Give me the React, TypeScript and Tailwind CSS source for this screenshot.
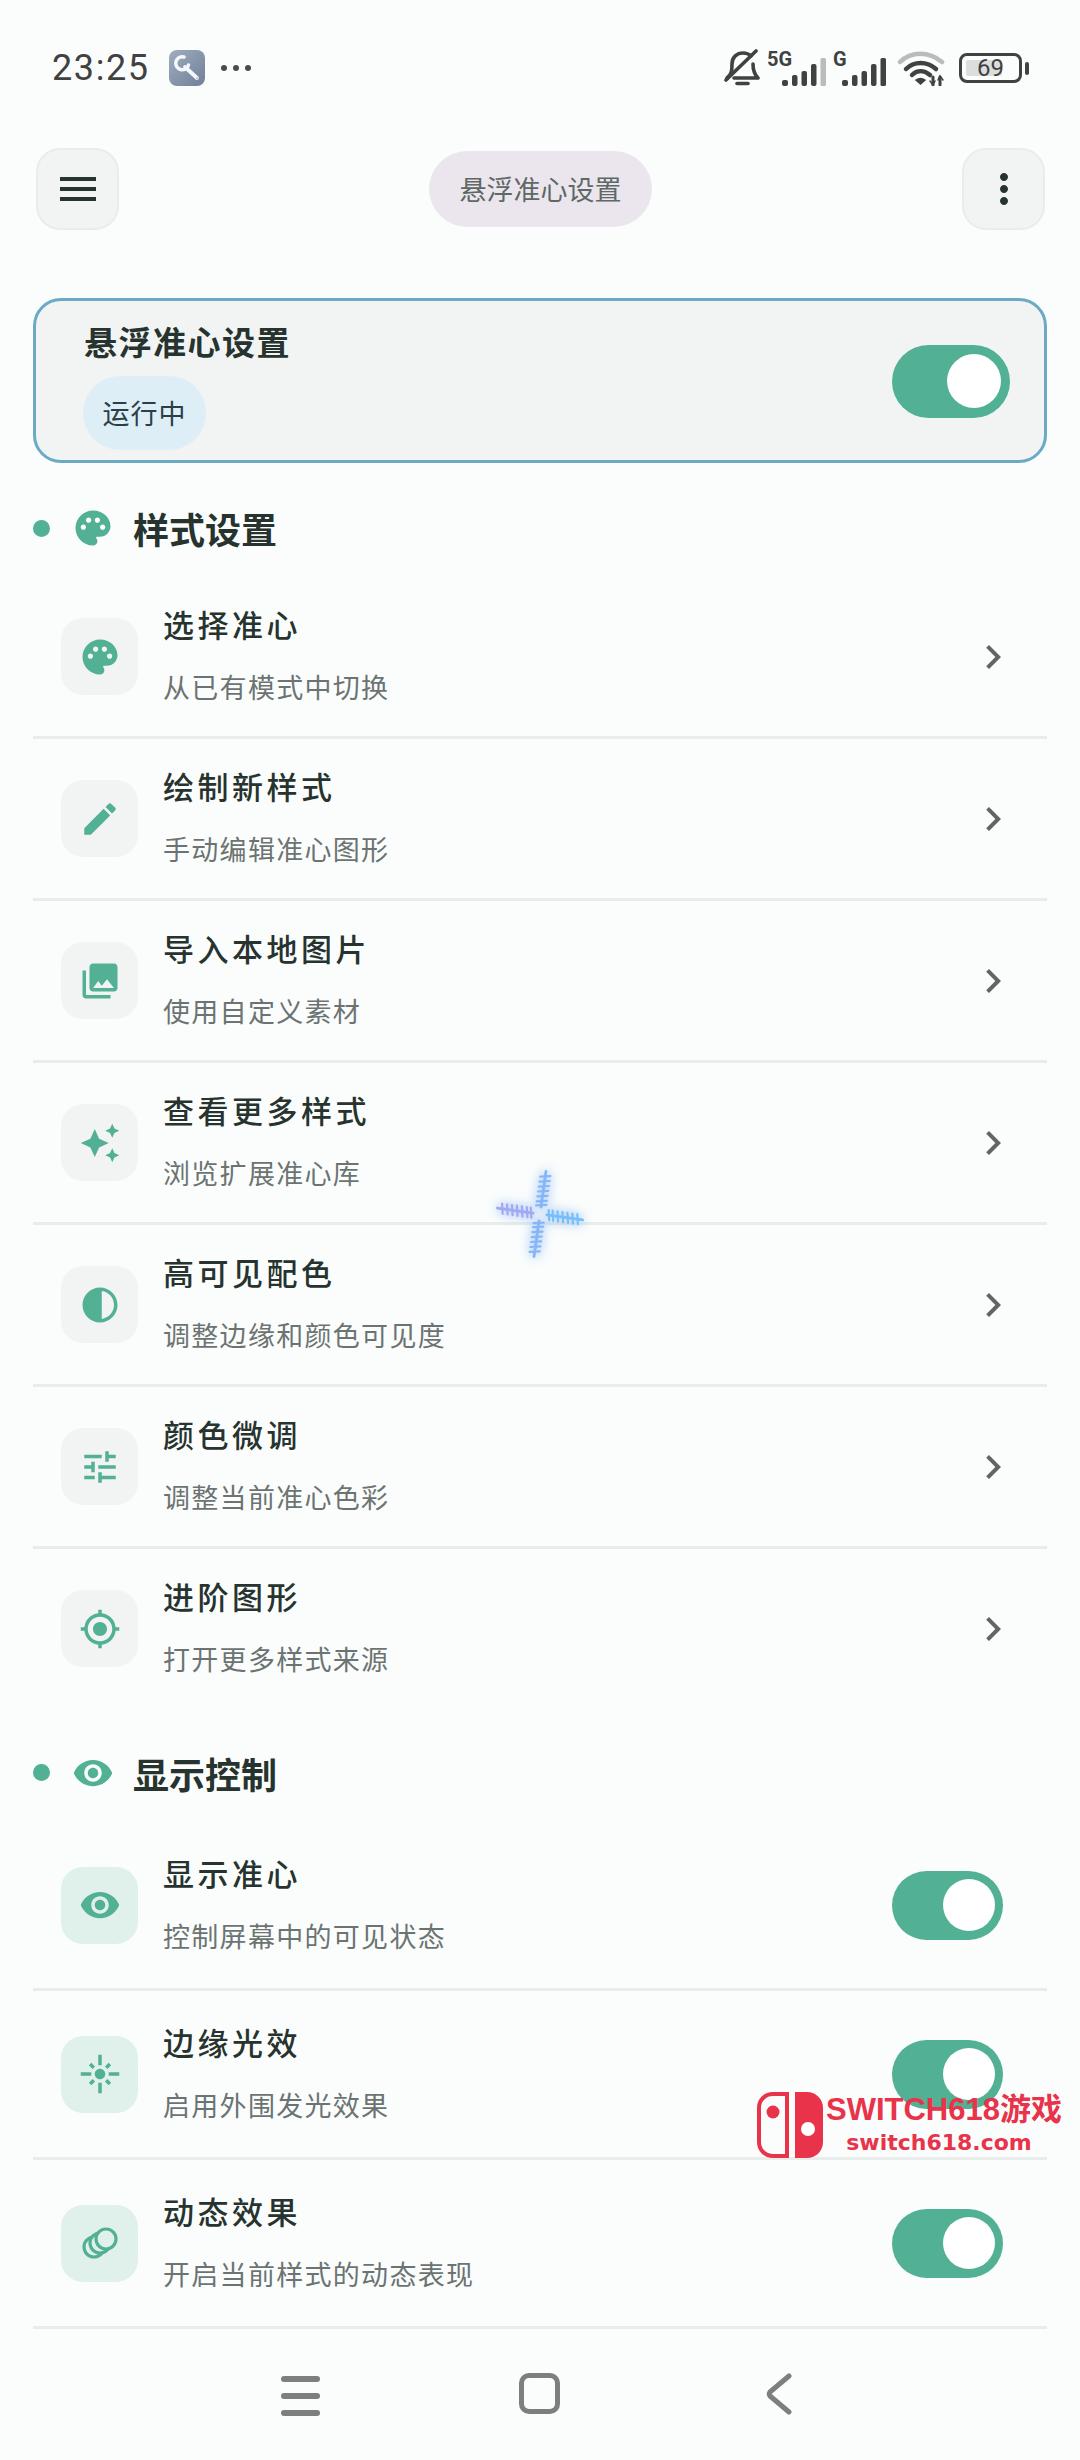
import React from 'react';
import {
  MdPalette,
  MdEdit,
  MdPhotoLibrary,
  MdAutoAwesome,
  MdContrast,
  MdTune,
  MdGpsFixed,
  MdVisibility,
  MdFlare,
  MdMenu,
  MdMoreVert,
  MdChevronRight,
} from 'react-icons/md';

const Switch = ({ large = false }: { large?: boolean }) => (
  <div
    className={`flex items-center justify-end rounded-full bg-[#52b094] ${
      large ? 'mt-[1px] h-[73px] w-[118px] pr-[9px]' : 'h-[69px] w-[111px] pr-[8px]'
    }`}
  >
    <div className={`rounded-full bg-white ${large ? 'h-[54px] w-[54px]' : 'h-[52px] w-[52px]'}`} />
  </div>
);

const SectionHeader = ({ icon, title, pad }: { icon: React.ReactNode; title: string; pad: string }) => (
  <div className={`flex items-center ${pad}`}>
    <div className="h-[17px] w-[17px] rounded-full bg-[#52b094]" />
    <div className="ml-[20px] flex w-[46px] justify-center text-[#52b094]">{icon}</div>
    <div className="ml-[17px] text-[36px] leading-[48px] font-bold text-[#27332f]">{title}</div>
  </div>
);

interface RowProps {
  icon: React.ReactNode;
  title: string;
  sub: string;
  tinted?: boolean;
  toggle?: boolean;
  last?: boolean;
}

const Row = ({ icon, title, sub, tinted, toggle, last }: RowProps) => (
  <div
    className={`flex items-center border-b-[3px] pl-[28px] ${toggle ? 'h-[169px] pr-[44px]' : 'h-[162px] pr-[30px]'} ${
      last ? 'border-transparent' : 'border-[#e8edeb]'
    }`}
  >
    <div
      className={`flex h-[77px] w-[77px] items-center justify-center rounded-[22px] text-[#52b094] ${
        tinted ? 'bg-[#dff1ea]' : 'bg-[#f2f4f4]'
      }`}
    >
      {icon}
    </div>
    <div className="ml-[25px] flex flex-1 flex-col gap-[23px] pb-[2px]">
      <div className="text-[31px] leading-[40px] font-medium tracking-[3.5px] text-[#27332f]">{title}</div>
      <div className="text-[27px] leading-[40px] tracking-[1.3px] text-[#6b7472]">{sub}</div>
    </div>
    {toggle ? <Switch /> : <MdChevronRight size={48} className="text-[#5f6664]" />}
  </div>
);

const Bars = ({ dim }: { dim?: boolean }) => (
  <svg width="44" height="28" viewBox="0 0 44 28">
    <rect x="0" y="22" width="6" height="6" rx="2" fill="#3f4241" />
    <rect x="10" y="17" width="5.5" height="11" rx="2" fill="#3f4241" />
    <rect x="19.5" y="13" width="5.5" height="15" rx="2" fill="#3f4241" />
    <rect x="29" y="6" width="5.5" height="22" rx="2" fill="#3f4241" />
    <rect x="38.5" y="0" width="5.5" height="28" rx="1.5" fill={dim ? '#b9bcbb' : '#3f4241'} />
  </svg>
);

const CrossArm = ({ angle, color }: { angle: number; color: string }) => (
  <g transform={`rotate(${angle} 50 50)`} stroke={color} strokeLinecap="round">
    <line x1="50" y1="7" x2="50" y2="43" strokeWidth="2.8" />
    {[12, 17, 22, 27, 32, 37, 41].map((y) => (
      <line key={y} x1="45" y1={y + 1} x2="55" y2={y - 1} strokeWidth="2.2" />
    ))}
  </g>
);

const RingsIcon = () => (
  <svg width="36" height="34" viewBox="0 0 36 34" fill="#dff1ea" stroke="#52b094" strokeWidth="3.2">
    <circle cx="12" cy="21" r="10" />
    <circle cx="18" cy="17" r="10" />
    <circle cx="24" cy="13" r="10" />
  </svg>
);

export default function App() {
  return (
    <div className="relative h-[2460px] w-[1080px] overflow-hidden bg-[#fbfdfc] font-['Noto_Sans_CJK_SC','Noto_Sans',sans-serif]">
      {/* status bar */}
      <div className="flex h-[148px] items-start justify-between pt-[50px] pr-[51px] pl-[52px]">
        <div className="flex h-[36px] items-center">
          <span className="font-['Roboto',sans-serif] text-[36px] leading-[36px] font-[450] tracking-[1.6px] text-[#3f4241]">
            23:25
          </span>
          <div className="ml-[19px] flex h-[36px] w-[36px] items-center justify-center rounded-[8px] bg-gradient-to-br from-[#a0adbe] to-[#6f8098]">
            <svg width="36" height="36" viewBox="0 0 36 36" fill="none" stroke="#f4f7fb" strokeLinecap="round">
              <path d="M15 7 A6.5 6.5 0 1 0 19.5 15" strokeWidth="3.5" />
              <path d="M16 17 L28 28" strokeWidth="3.8" />
              <circle cx="28" cy="28" r="0.8" fill="#8a98aa" stroke="none" />
            </svg>
          </div>
          <div className="ml-[16px] flex gap-[6px]">
            <div className="h-[6px] w-[6px] rounded-full bg-[#4a4d4c]" />
            <div className="h-[6px] w-[6px] rounded-full bg-[#4a4d4c]" />
            <div className="h-[6px] w-[6px] rounded-full bg-[#4a4d4c]" />
          </div>
        </div>
        <div className="flex h-[36px] items-center">
          <svg width="36" height="38" viewBox="0 0 36 38" fill="none" stroke="#3f4241" strokeWidth="3.6" strokeLinecap="round" strokeLinejoin="round">
            <path d="M3 29 C8 25 8 21 8 15 C8 8 13 4 19 4 C22 4 25 5 27 7" />
            <path d="M29 15 C29 21 30 25 34 29 L10 29" />
            <path d="M2 31 L32 2" />
            <path d="M13 34.5 H24" strokeWidth="3.6" />
          </svg>
          <div className="relative ml-[7px] h-[36px] w-[59px]">
            <span className="absolute top-[-1px] left-0 font-['Roboto',sans-serif] text-[20px] leading-[20px] font-bold text-[#3f4241]">5G</span>
            <div className="absolute right-0 bottom-0">
              <Bars dim />
            </div>
          </div>
          <div className="relative ml-[7px] h-[36px] w-[53px]">
            <span className="absolute top-[-1px] left-0 font-['Roboto',sans-serif] text-[20px] leading-[20px] font-bold text-[#3f4241]">G</span>
            <div className="absolute right-0 bottom-0">
              <Bars />
            </div>
          </div>
          <svg className="ml-[11px]" width="48" height="36" viewBox="0 0 48 36" fill="none" strokeLinecap="round">
            <path d="M3 12 C14 1 32 1 45 12" stroke="#b9bcbb" strokeWidth="4.5" />
            <path d="M9 19 C17 11 30 11 39 19" stroke="#3f4241" strokeWidth="4.5" />
            <path d="M15 25 C20 20 27 20 33 25" stroke="#3f4241" strokeWidth="4.5" />
            <path d="M23.5 34 L19 30 C22 28 25 28 28 30 Z" fill="#3f4241" stroke="#3f4241" strokeWidth="1.5" />
            <path d="M36 27 V35 M43 35 V27" stroke="#3f4241" strokeWidth="3" />
            <path d="M33 31 L36 35 L38 31 M41 30 L43 26 L46 30" stroke="#3f4241" strokeWidth="1.5" />
          </svg>
          <div className="ml-[14px] flex items-center">
            <div className="relative flex h-[30px] w-[63px] items-center justify-center overflow-hidden rounded-[8px] border-[3px] border-[#3f4241]">
              <div className="absolute top-[4px] bottom-[4px] left-[4px] w-[36px] rounded-[2px] bg-[#dcdede]" />
              <span className="relative font-['Roboto',sans-serif] text-[24px] leading-[24px] text-[#3f4241]">69</span>
            </div>
            <div className="ml-[3px] h-[13px] w-[4px] rounded-full bg-[#3f4241]" />
          </div>
        </div>
      </div>

      {/* top bar */}
      <div className="flex h-[82px] items-center justify-between pr-[35px] pl-[36px]">
        <div className="flex h-[82px] w-[83px] items-center justify-center rounded-[24px] border-[2px] border-[#e8edeb] bg-[#f2f4f3] text-[#27332f]">
          <MdMenu size={48} />
        </div>
        <div className="flex h-[76px] w-[223px] items-center justify-center rounded-full bg-[#ebe6ee] text-[27px] text-[#5f6866]">
          悬浮准心设置
        </div>
        <div className="flex h-[82px] w-[83px] items-center justify-center rounded-[24px] border-[2px] border-[#e8edeb] bg-[#f2f4f3] text-[#27332f]">
          <MdMoreVert size={48} />
        </div>
      </div>

      {/* master card */}
      <div className="mx-[33px] mt-[68px] flex h-[165px] items-center justify-between rounded-[28px] border-[3px] border-[#6aaac4] bg-[#f2f4f4] pr-[34px] pl-[47px]">
        <div className="flex flex-col items-start gap-[15px] pt-[10px]">
          <div className="ml-[1px] text-[33px] leading-[40px] font-bold tracking-[1.5px] text-[#27332f]">悬浮准心设置</div>
          <div className="flex h-[74px] w-[123px] items-center justify-center rounded-full bg-[#deeef7] text-[27px] tracking-[1px] text-[#2a3f47]">
            运行中
          </div>
        </div>
        <Switch large />
      </div>

      {/* style section */}
      <div className="px-[33px]">
        <SectionHeader icon={<MdPalette size={42} />} title="样式设置" pad="h-[114px] pt-[16px]" />
        <Row icon={<MdPalette size={42} />} title="选择准心" sub="从已有模式中切换" />
        <Row icon={<MdEdit size={42} />} title="绘制新样式" sub="手动编辑准心图形" />
        <Row icon={<MdPhotoLibrary size={42} />} title="导入本地图片" sub="使用自定义素材" />
        <Row icon={<MdAutoAwesome size={42} />} title="查看更多样式" sub="浏览扩展准心库" />
        <Row icon={<MdContrast size={42} />} title="高可见配色" sub="调整边缘和颜色可见度" />
        <Row icon={<MdTune size={42} />} title="颜色微调" sub="调整当前准心色彩" />
        <Row icon={<MdGpsFixed size={42} />} title="进阶图形" sub="打开更多样式来源" last />

        <SectionHeader icon={<MdVisibility size={42} />} title="显示控制" pad="h-[111px] pt-[12px]" />
        <Row icon={<MdVisibility size={42} />} title="显示准心" sub="控制屏幕中的可见状态" tinted toggle />
        <Row icon={<MdFlare size={42} />} title="边缘光效" sub="启用外围发光效果" tinted toggle />
        <Row icon={<RingsIcon />} title="动态效果" sub="开启当前样式的动态表现" tinted toggle />
      </div>

      {/* nav bar */}
      <div className="absolute right-0 bottom-0 left-0 flex h-[132px] items-start pt-[45px]">
        <div className="ml-[281px] flex w-[39px] flex-col gap-[11px] pt-[3px]">
          <div className="h-[6px] rounded-full bg-[#7c7f7e]" />
          <div className="h-[6px] rounded-full bg-[#7c7f7e]" />
          <div className="h-[6px] rounded-full bg-[#7c7f7e]" />
        </div>
        <div className="ml-[199px] h-[41px] w-[41px] rounded-[10px] border-[5px] border-[#7c7f7e]" />
        <svg className="ml-[206px]" width="26" height="42" viewBox="0 0 26 42" fill="none" stroke="#7c7f7e" strokeWidth="5" strokeLinecap="round" strokeLinejoin="round">
          <path d="M23 3 L4 19 Q2.5 21 4 23 L23 39" />
        </svg>
      </div>

      {/* floating crosshair overlay */}
      <svg
        className="absolute top-[1164px] left-[490px] drop-shadow-[0_0_6px_#7fb0f5]"
        width="100"
        height="100"
        viewBox="0 0 100 100"
        fill="none"
      >
        <CrossArm angle={8} color="#85b6f8" />
        <CrossArm angle={98} color="#76c0fa" />
        <CrossArm angle={188} color="#85b6f8" />
        <CrossArm angle={278} color="#a3a8f4" />
      </svg>

      {/* watermark */}
      <div className="absolute top-[2092px] left-[757px] flex items-start">
        <svg width="66" height="66" viewBox="0 0 66 66">
          <path d="M30 2 H16 C8 2 2 8 2 16 V50 C2 58 8 64 16 64 H30 Z" fill="none" stroke="#e8334a" strokeWidth="4" />
          <circle cx="16" cy="20" r="6.5" fill="#e8334a" />
          <path d="M38 0 H50 C59 0 66 7 66 16 V50 C66 59 59 66 50 66 H38 Z" fill="#e8334a" />
          <circle cx="51" cy="37" r="7" fill="#fff" />
        </svg>
        <div className="ml-[3px] flex flex-col items-center">
          <div className="font-['Liberation_Sans','Noto_Sans_CJK_SC',sans-serif] text-[31px] leading-[36px] font-bold text-[#e8334a]">
            SWITCH618游戏
          </div>
          <div className="mt-[3px] mr-[10px] font-['DejaVu_Sans',sans-serif] text-[22px] leading-[24px] font-bold text-[#e8334a]">
            switch618.com
          </div>
        </div>
      </div>
    </div>
  );
}
